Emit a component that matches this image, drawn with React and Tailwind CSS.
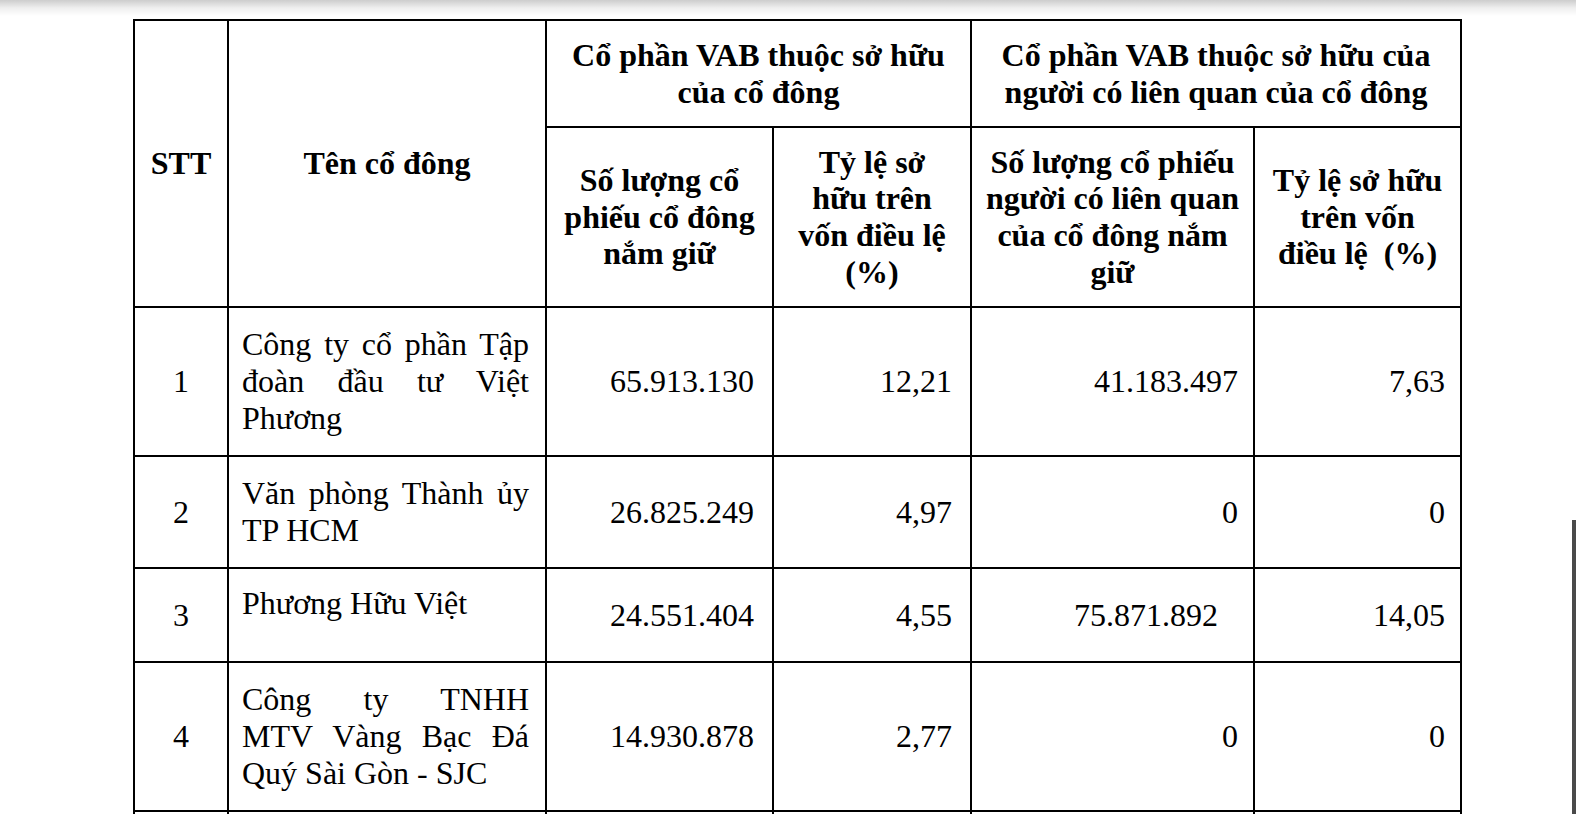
const rows = [
  {
    stt: '1',
    name: ['Công ty cổ phần Tập', 'đoàn đầu tư Việt', 'Phương'],
    own: '65.913.130',
    ownPct: '12,21',
    rel: '41.183.497',
    relPct: '7,63',
    h: 'h-[149px]',
  },
  {
    stt: '2',
    name: ['Văn phòng Thành ủy', 'TP HCM'],
    own: '26.825.249',
    ownPct: '4,97',
    rel: '0',
    relPct: '0',
    h: 'h-[112px]',
  },
  {
    stt: '3',
    name: ['Phương Hữu Việt'],
    own: '24.551.404',
    ownPct: '4,55',
    rel: '75.871.892',
    relPct: '14,05',
    h: 'h-[94px]',
    nameTop: true,
    relWide: true,
  },
  {
    stt: '4',
    name: ['Công ty TNHH', 'MTV Vàng Bạc Đá', 'Quý Sài Gòn - SJC'],
    own: '14.930.878',
    ownPct: '2,77',
    rel: '0',
    relPct: '0',
    h: 'h-[149px]',
  },
];

function NameLines({ lines }) {
  return lines.map((line, i) => (
    <div
      key={i}
      className={i < lines.length - 1 ? 'text-justify [text-align-last:justify]' : 'text-left'}
    >
      {line}
    </div>
  ));
}

export default function App() {
  const cell = 'border-2 border-black';
  return (
    <div className="relative h-[814px] overflow-hidden bg-white text-black font-['Liberation_Serif','Times_New_Roman',serif] text-[32px] leading-[36.7px]">
      {/* viewer shadow at top */}
      <div className="absolute top-0 inset-x-0 h-[16px] bg-linear-to-b from-[#cdcdcd] via-[#efefef] to-white/0" />

      <div className="pt-[19px] pl-[133px]">
        <table className="table-fixed border-collapse w-[1327px]">
          <colgroup>
            <col className="w-[94px]" />
            <col className="w-[318px]" />
            <col className="w-[227px]" />
            <col className="w-[198px]" />
            <col className="w-[283px]" />
            <col className="w-[207px]" />
          </colgroup>
          <thead className="font-bold">
            <tr className="h-[107px]">
              <th rowSpan={2} className={`${cell} align-middle text-center font-bold`}>STT</th>
              <th rowSpan={2} className={`${cell} align-middle text-center font-bold`}>Tên cổ đông</th>
              <th colSpan={2} className={`${cell} align-middle text-center font-bold`}>
                Cổ phần VAB thuộc sở hữu
                <br />
                của cổ đông
              </th>
              <th colSpan={2} className={`${cell} align-middle text-center font-bold`}>
                Cổ phần VAB thuộc sở hữu của
                <br />
                người có liên quan của cổ đông
              </th>
            </tr>
            <tr className="h-[180px]">
              <th className={`${cell} align-middle text-center font-bold`}>
                Số lượng cổ
                <br />
                phiếu cổ đông
                <br />
                nắm giữ
              </th>
              <th className={`${cell} align-middle text-center font-bold`}>
                Tỷ lệ sở
                <br />
                hữu trên
                <br />
                vốn điều lệ
                <br />
                (%)
              </th>
              <th className={`${cell} align-middle text-center font-bold`}>
                Số lượng cổ phiếu
                <br />
                người có liên quan
                <br />
                của cổ đông nắm
                <br />
                giữ
              </th>
              <th className={`${cell} align-middle text-center font-bold`}>
                Tỷ lệ sở hữu
                <br />
                trên vốn
                <br />
                điều lệ&nbsp; (%)
              </th>
            </tr>
          </thead>
          <tbody>
            {rows.map((r) => (
              <tr key={r.stt} className={r.h}>
                <td className={`${cell} align-middle text-center`}>{r.stt}</td>
                <td className={`${cell} pl-[13px] pr-[16px] ${r.nameTop ? 'align-top pt-[16px]' : 'align-middle'}`}>
                  <NameLines lines={r.name} />
                </td>
                <td className={`${cell} align-middle text-right pr-[18px]`}>{r.own}</td>
                <td className={`${cell} align-middle text-right pr-[18px]`}>{r.ownPct}</td>
                <td className={`${cell} align-middle text-right ${r.relWide ? 'pr-[35px]' : 'pr-[15px]'}`}>{r.rel}</td>
                <td className={`${cell} align-middle text-right pr-[15px]`}>{r.relPct}</td>
              </tr>
            ))}
            <tr className="h-[110px]">
              <td className={cell} />
              <td className={cell} />
              <td className={cell} />
              <td className={cell} />
              <td className={cell} />
              <td className={cell} />
            </tr>
          </tbody>
        </table>
      </div>

      {/* scrollbar thumb at right edge */}
      <div className="absolute right-0 top-[520px] bottom-0 w-[4px] bg-[#4a4a4a]" />
    </div>
  );
}
